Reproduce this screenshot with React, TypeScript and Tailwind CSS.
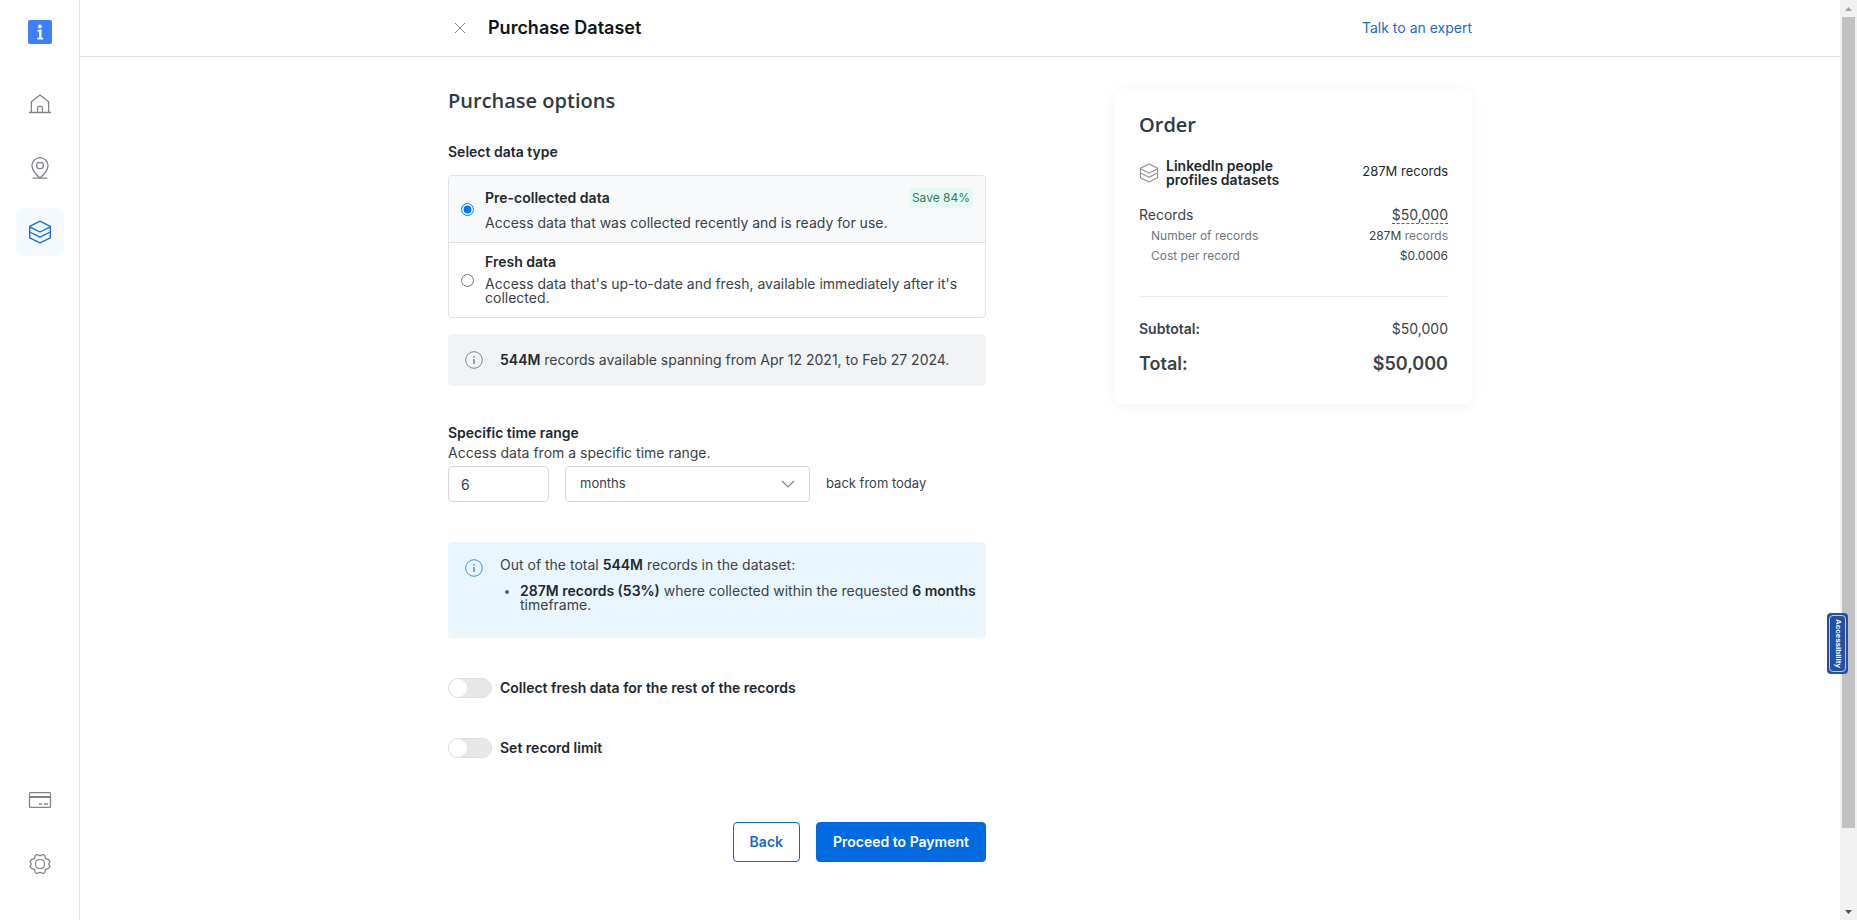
import { ReactNode, useState } from "react";

type IconProps = { className?: string };

const HomeIcon = ({ className }: IconProps) => (
  <svg className={className} viewBox="0 0 24 24" fill="none" stroke="currentColor" strokeWidth="1.3">
    <path d="M1 20.500h22M3.400 20.500V9.800L12 3l8.600 6.800v10.700M9.600 20.500v-5a1.200 1.200 0 0 1 1.200-1.200h2.400a1.200 1.200 0 0 1 1.200 1.200v5" strokeLinejoin="round" />
  </svg>
);

const PinIcon = ({ className }: IconProps) => (
  <svg className={className} viewBox="0 0 24 24" fill="none" stroke="currentColor" strokeWidth="1.300">
    <path d="M12 22C8.500 19.200 4 14.600 4 9.600a8 8 0 0 1 16 0c0 5-4.500 9.600-8 12.400ZM4.600 22.200h14.800" />
    <rect x="8.800" y="6.300" width="6.400" height="6.400" rx="2.600" />
  </svg>
);

const LayersIcon = ({ className }: IconProps) => (
  <svg className={className} viewBox="0 0 24 24" fill="none" stroke="currentColor" strokeWidth="1.300" strokeLinejoin="round">
    <path d="M12 1.200 22.300 6.400v11.400L12 22.800 1.700 17.800V6.400L12 1.200Z" />
    <path d="M1.700 6.800 12 12l10.300-5.200M1.700 12 12 17.200 22.300 12" />
  </svg>
);

const CardIcon = ({ className }: IconProps) => (
  <svg className={className} viewBox="0 0 24 24" fill="none" stroke="currentColor" strokeWidth="1.300">
    <rect x="1.500" y="4.600" width="21" height="14.800" rx="1" />
    <path d="M1.500 8.600h21M1.500 9.400h21M11 16h3M16 16h4" />
  </svg>
);

const GearIcon = ({ className }: IconProps) => (
  <svg className={className} viewBox="0 0 24 24" fill="none" stroke="currentColor" strokeWidth="1.300" strokeLinejoin="round">
    <path d="M9.200 2.600c1 0 1.600 1 2.800 1s1.800-1 2.800-1c1.500 0 2.200 1 2.300 2.200.1 1.200.6 1.700 1.700 2.100 1.600.5 3 1.300 3 2.800 0 1-1 1.400-1 2.300s1 1.300 1 2.300c0 1.500-1.400 2.300-3 2.800-1.100.4-1.600.9-1.700 2.100-.1 1.200-.8 2.200-2.300 2.200-1 0-1.600-1-2.800-1s-1.800 1-2.800 1c-1.500 0-2.200-1-2.300-2.200-.1-1.200-.6-1.700-1.700-2.100-1.600-.5-3-1.300-3-2.800 0-1 1-1.400 1-2.300s-1-1.300-1-2.300c0-1.500 1.400-2.300 3-2.800 1.100-.4 1.600-.9 1.700-2.100.1-1.200.8-2.200 2.300-2.200Z" />
    <circle cx="12" cy="12" r="4.600" />
  </svg>
);

const InfoIcon = ({ className }: IconProps) => (
  <svg className={className} viewBox="0 0 18 18" fill="none" stroke="currentColor">
    <circle cx="9" cy="9" r="8.300" />
    <path d="M9 8v5M9 5v1.500" strokeWidth="1.500" />
  </svg>
);

const NavItem = ({ label, active, children }: { label: string; active?: boolean; children: ReactNode }) => (
  <a
    href="#"
    aria-label={label}
    className={`flex h-12 w-12 items-center justify-center rounded-md ${
      active ? "bg-[#f5faff] text-[#0f6cd0]" : "text-[#7f8489]"
    }`}
  >
    {children}
  </a>
);

const Toggle = ({ id, label }: { id: string; label: string }) => (
  <div className="flex items-center gap-2">
    <input
      id={id}
      type="checkbox"
      role="switch"
      className="h-5 w-11 appearance-none rounded-full border border-[#dcdee0] bg-[#e6e7e8] before:block before:h-[18px] before:w-[18px] before:rounded-full before:bg-white checked:bg-[#006ae0] checked:before:ml-6"
    />
    <label htmlFor={id} className="text-sm leading-5 font-semibold">
      {label}
    </label>
  </div>
);

const Sidebar = () => (
  <nav className="flex w-20 shrink-0 flex-col items-center border-r border-[#dfe1e3] pt-5 pb-8">
    <a href="#" aria-label="Main page" className="mb-9 h-6 w-6">
      <svg viewBox="0 0 24 24">
        <rect width="24" height="24" rx="2" fill="#3d7ffc" />
        <circle cx="12" cy="6.500" r="1.900" fill="#fff" />
        <path d="M9.500 9.800h4v8h1.400v1.700H9.400v-1.700h1.700v-6.300H9.500Z" fill="#fff" />
      </svg>
    </a>
    <div className="flex flex-col gap-4">
      <NavItem label="Home">
        <HomeIcon className="h-6 w-6" />
      </NavItem>
      <NavItem label="Proxies">
        <PinIcon className="h-6 w-6" />
      </NavItem>
      <NavItem label="Datasets" active>
        <LayersIcon className="h-6 w-6" />
      </NavItem>
    </div>
    <div className="mt-auto flex flex-col gap-4">
      <NavItem label="Billing">
        <CardIcon className="h-6 w-6" />
      </NavItem>
      <NavItem label="Settings">
        <GearIcon className="h-6 w-6" />
      </NavItem>
    </div>
  </nav>
);

const OrderSummary = () => (
  <aside className="w-[357px] shrink-0 rounded-lg bg-white p-6 shadow-[0_2px_16px_rgba(0,0,0,0.05)]">
    <h2 className="font-['Open_Sans',sans-serif] text-xl leading-6 font-semibold text-[#2d3a45]">Order</h2>
    <div className="mt-[22px] flex items-start justify-between">
      <div className="flex items-center gap-[7px]">
        <LayersIcon className="h-5 w-5 text-[#8b9095]" />
        <h3 className="w-32 text-sm leading-[14px] font-semibold">LinkedIn people profiles datasets</h3>
      </div>
      <p className="text-[13px] leading-6">287M records</p>
    </div>
    <dl className="mt-[18px] text-xs leading-5 text-[#6d7880]">
      <div className="mb-px flex items-center justify-between text-sm text-[#3a4248]">
        <dt>Records</dt>
        <dd className="border-b border-dashed border-[#5c6368] leading-4">$50,000</dd>
      </div>
      <div className="flex justify-between pl-3">
        <dt>Number of records</dt>
        <dd>
          <span className="text-[#3a4248]">287M</span> records
        </dd>
      </div>
      <div className="flex justify-between pl-3">
        <dt>Cost per record</dt>
        <dd className="text-[#3a4248]">$0.0006</dd>
      </div>
    </dl>
    <hr className="mt-[30px] mb-5 border-[#e8eaeb]" />
    <dl className="text-[#3a4248]">
      <div className="flex justify-between text-sm leading-6">
        <dt className="font-semibold">Subtotal:</dt>
        <dd>$50,000</dd>
      </div>
      <div className="my-[11px] mb-1 flex justify-between text-lg leading-6 font-semibold">
        <dt>Total:</dt>
        <dd>$50,000</dd>
      </div>
    </dl>
  </aside>
);

const PurchaseOptions = () => {
  const [dataType, setDataType] = useState("collected");

  return (
    <section className="w-full max-w-[538px]">
      <h2 className="font-['Open_Sans',sans-serif] text-xl leading-6 font-semibold text-[#2d3a45]">
        Purchase options
      </h2>
      <fieldset className="mt-[29px]">
        <legend className="text-sm leading-5 font-semibold">Select data type</legend>
        <div className="mt-[13px] overflow-hidden rounded border border-[#dfe1e4]">
          <div className="flex items-center gap-[11px] border-b border-[#dfe1e4] bg-[#f7f9fb] p-3">
            <input
              id="collected"
              type="radio"
              name="dataType"
              className="h-[13px] w-[13px] shrink-0"
              checked={dataType === "collected"}
              onChange={() => setDataType("collected")}
            />
            <div className="flex-1">
              <div className="flex items-center justify-between">
                <label htmlFor="collected" className="text-sm leading-5 font-semibold">
                  Pre-collected data
                </label>
                <span className="rounded-sm bg-[#e5f9f2] px-[3px] text-xs leading-5 text-[#35785f]">Save 84%</span>
              </div>
              <p className="mt-2 text-sm leading-[14px] text-[#3a4248]">
                Access data that was collected recently and is ready for use.
              </p>
            </div>
          </div>
          <div className="flex items-center gap-[11px] p-3">
            <input
              id="fresh"
              type="radio"
              name="dataType"
              className="h-[13px] w-[13px] shrink-0"
              checked={dataType === "fresh"}
              onChange={() => setDataType("fresh")}
            />
            <div className="flex-1">
              <label htmlFor="fresh" className="block text-sm leading-[14px] font-semibold">
                Fresh data
              </label>
              <p className="mt-2 text-sm leading-[14px] text-[#3a4248]">
                Access data that's up-to-date and fresh, available immediately after it's collected.
              </p>
            </div>
          </div>
        </div>
      </fieldset>

      <div className="mt-4 flex items-center gap-[17px] rounded bg-[#f1f3f5] px-[17px] py-4">
        <InfoIcon className="h-[18px] w-[18px] shrink-0 text-[#7f8489]" />
        <p className="text-sm leading-5 text-[#3a4248]">
          <b className="font-semibold text-[#21282e]">544M</b> records available spanning from Apr 12 2021, to Feb 27 2024.
        </p>
      </div>

      <h3 className="mt-[37px] text-sm leading-5 font-semibold">Specific time range</h3>
      <p className="text-sm leading-5 text-[#3a4248]">Access data from a specific time range.</p>
      <div className="mt-[3px] flex items-center gap-4 text-[13px] text-[#3a4248]">
        <input
          aria-label="Amount"
          defaultValue="6"
          className="h-9 w-[101px] rounded border border-[#d4d7da] px-3 text-sm"
        />
        <div className="relative">
          <select
            aria-label="Unit"
            defaultValue="months"
            className="h-9 w-[245px] appearance-none rounded border border-[#d4d7da] bg-white px-3.5"
          >
            <option>days</option>
            <option>months</option>
            <option>years</option>
          </select>
          <svg
            className="pointer-events-none absolute top-3.5 right-[15px] h-2 w-3.5 text-[#7f8489]"
            viewBox="0 0 14 8"
            fill="none"
            stroke="currentColor"
            strokeWidth="1.200"
          >
            <path d="m1 1 6 6 6-6" />
          </svg>
        </div>
        <span>back from today</span>
      </div>

      <div className="mt-10 flex gap-[17px] rounded bg-[#eaf6ff] pt-4 pr-2 pb-[18px] pl-[17px]">
        <InfoIcon className="mt-px h-[18px] w-[18px] shrink-0 text-[#3c94dd]" />
        <div className="text-sm leading-[14px] text-[#3a4248]">
          <p>
            Out of the total <b className="font-semibold text-[#21282e]">544M</b> records in the dataset:
          </p>
          <ul className="mt-3 mb-2 list-disc pl-5 marker:text-xs marker:text-[#5c6368]">
            <li>
              <b className="font-semibold text-[#21282e]">287M records (53%)</b> where collected within the requested{" "}
              <b className="font-semibold text-[#21282e]">6 months</b> timeframe.
            </li>
          </ul>
        </div>
      </div>

      <div className="mt-10 flex flex-col gap-10">
        <Toggle id="collectFresh" label="Collect fresh data for the rest of the records" />
        <Toggle id="recordLimit" label="Set record limit" />
      </div>

      <div className="mt-16 flex justify-end gap-4 text-sm font-semibold">
        <button className="h-10 rounded border border-[#1268c3] px-4 text-[#1d69c4]">Back</button>
        <button className="h-10 rounded border border-[#006ae0] bg-[#006ae0] px-4 text-white">
          Proceed to Payment
        </button>
      </div>
    </section>
  );
};

const ScrollTrack = () => (
  <div className="flex w-[17px] shrink-0 flex-col items-center bg-[#f1f1f1]">
    <svg className="h-[17px] w-[17px]" viewBox="0 0 17 17">
      <path d="M5 11h7L8.500 7Z" fill="#a3a3a3" />
    </svg>
    <div className="w-[13px] grow-[811] bg-[#c1c1c1]" />
    <div className="grow-[75]" />
    <svg className="h-[17px] w-[17px]" viewBox="0 0 17 17">
      <path d="M5 7h7l-3.500 4Z" fill="#505050" />
    </svg>
  </div>
);

const App = () => {
  return (
    <div className="flex min-h-screen bg-white font-['Inter',sans-serif] text-[#21282e]">
      <Sidebar />
      <div className="min-w-0 flex-1">
        <header className="border-b border-[#dfe1e3]">
          <div className="mx-auto flex h-14 max-w-5xl items-center">
            <button aria-label="Close" className="mr-4 flex h-6 w-6 items-center justify-center text-[#7f8489]">
              <svg className="h-3 w-3" viewBox="0 0 12 12" fill="none" stroke="currentColor">
                <path d="m1 1 10 10M11 1 1 11" />
              </svg>
            </button>
            <h1 className="text-lg leading-6 font-semibold text-[#101418]">Purchase Dataset</h1>
            <a href="#" className="ml-auto text-sm text-[#1d69c4]">
              Talk to an expert
            </a>
          </div>
        </header>
        <main className="mx-auto flex max-w-5xl items-start justify-between gap-8 pt-8 pb-14">
          <PurchaseOptions />
          <OrderSummary />
        </main>
      </div>
      <ScrollTrack />
      <button className="fixed top-[613px] right-[9px] flex h-[61px] w-[21px] items-center justify-center rounded bg-[#2450a4] p-0.5">
        <span className="flex h-full w-full items-center justify-center rounded-sm border border-[#b9cdf0] font-['Liberation_Sans',sans-serif] text-[8px] font-bold text-white [writing-mode:vertical-rl]">
          Accessibility
        </span>
      </button>
    </div>
  );
};

export default App;
